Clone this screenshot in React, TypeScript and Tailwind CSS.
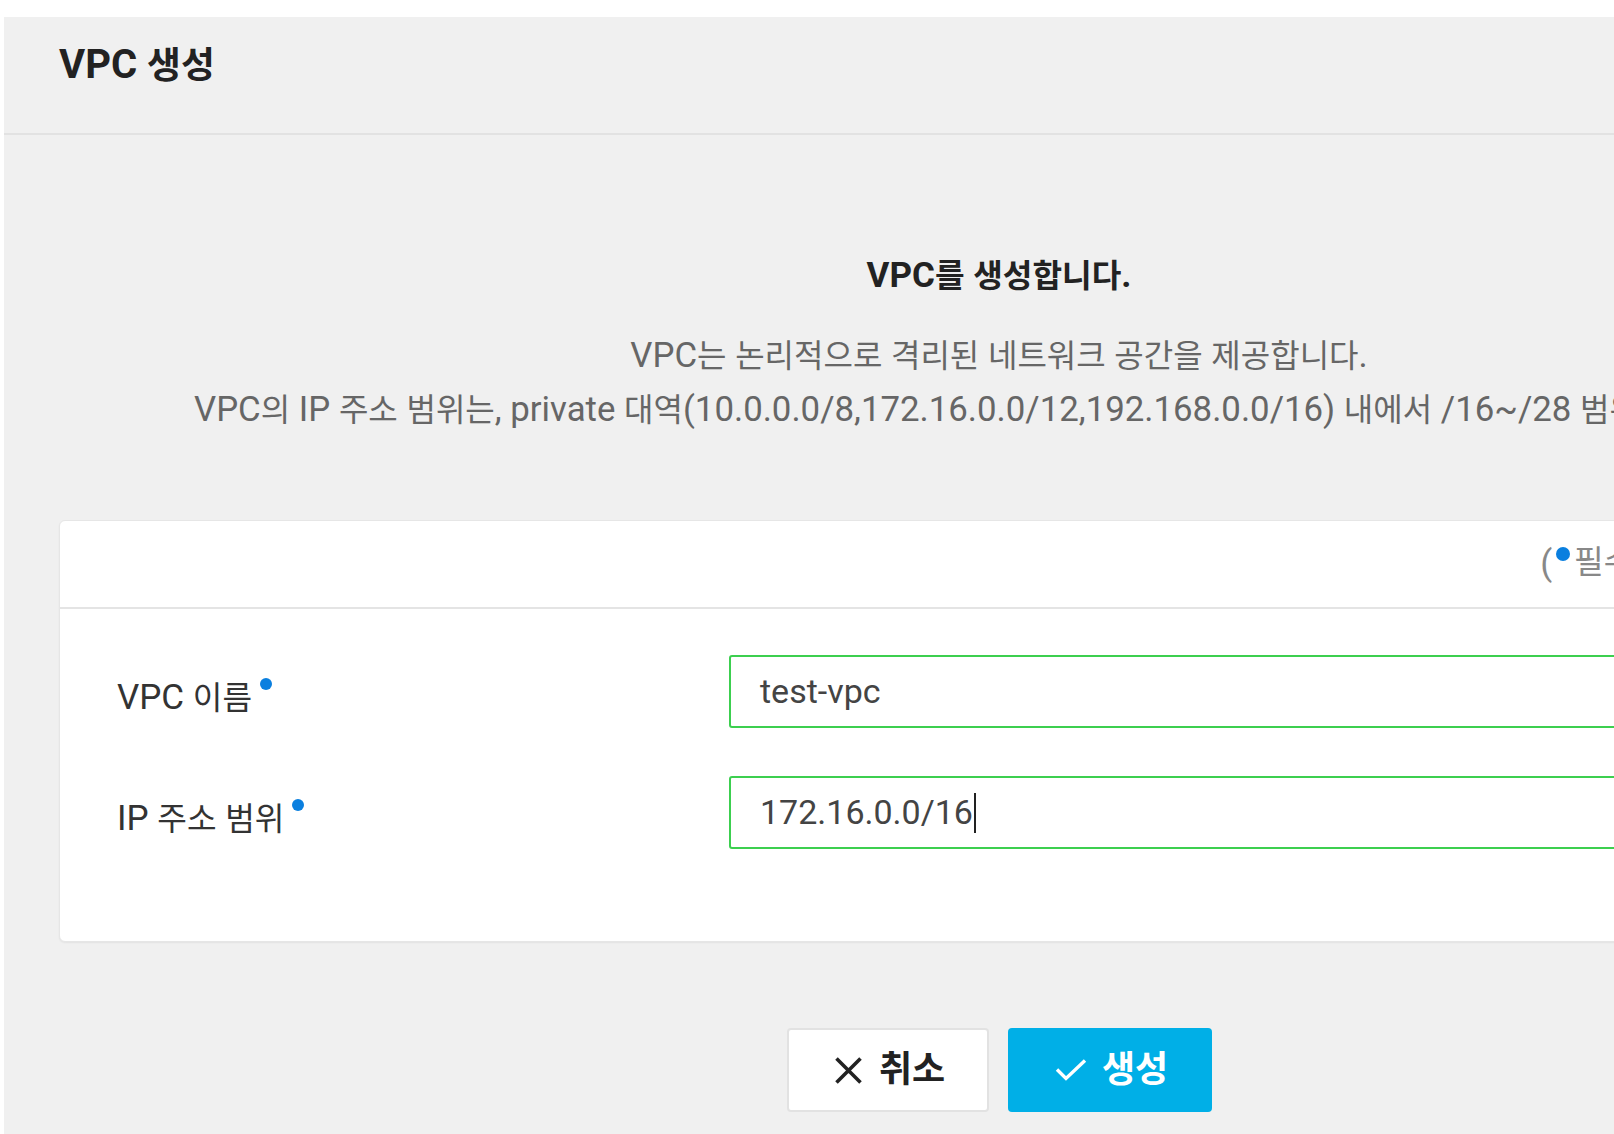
const fontStack = "font-['Roboto','Noto_Sans_CJK_KR',sans-serif]";

const fields = [
  { label: "VPC 이름", value: "test-vpc", caret: false },
  { label: "IP 주소 범위", value: "172.16.0.0/16", caret: true },
];

// hangul runs are set a bit smaller than the latin text around them
function Ko({ text }: { text: string }) {
  return (
    <>
      {text.split(/([가-힣]+)/).map((part, i) =>
        /[가-힣]/.test(part) ? (
          <span key={i} className="text-[0.92em]">
            {part}
          </span>
        ) : (
          part
        ),
      )}
    </>
  );
}

function RequiredDot() {
  return <span className="ml-[8px] inline-block h-[12px] w-[12px] shrink-0 rounded-full bg-[#0a7fdf]" />;
}

function CloseIcon() {
  return (
    <svg width="29" height="29" viewBox="0 0 29 29" fill="none" aria-hidden>
      <path d="M2.5 2.5L26.5 26.5M26.5 2.5L2.5 26.5" stroke="currentColor" strokeWidth="3.6" />
    </svg>
  );
}

function CheckIcon() {
  return (
    <svg width="32" height="22" viewBox="0 0 32 22" fill="none" aria-hidden>
      <path d="M2 10.5L11 19.5L30 1.5" stroke="currentColor" strokeWidth="3.4" />
    </svg>
  );
}

export default function App() {
  return (
    <div className={`h-[1134px] w-[1614px] overflow-hidden bg-white pl-[4px] pt-[17px] ${fontStack}`}>
      <div className="min-h-[1117px] w-[1990px] bg-[#f0f0f0]">
        <header className="box-border h-[118px] border-b-2 border-[#e2e2e2] px-[55px] pt-[26px]">
          <h1 className="text-[40px] font-bold leading-[44px] text-[#222]">
            <Ko text="VPC 생성" />
          </h1>
        </header>

        <main className="px-[55px]">
          <div className="pt-[119px] text-center">
            <h2 className="text-[35px] font-bold leading-[44px] text-[#222]">
              <Ko text="VPC를 생성합니다." />
            </h2>
            <p className="mt-[31px] text-[34.8px] leading-[53px] text-[#666]">
              <Ko text="VPC는 논리적으로 격리된 네트워크 공간을 제공합니다." />
              <br />
              <Ko text="VPC의 IP 주소 범위는, private 대역(10.0.0.0/8,172.16.0.0/12,192.168.0.0/16) 내에서 /16~/28 범위여야 합니다." />
            </p>
          </div>

          <section className="mt-[83px] rounded-[6px] border border-[#e6e6e6] bg-white shadow-[0_1px_2px_rgba(0,0,0,0.06)]">
            <div className="box-border flex h-[88px] items-center justify-end border-b-2 border-[#e4e4e4] pr-[174px]">
              <span className="flex items-start text-[35px] text-[#888]">
                (
                <span className="mt-[9px] mr-[4px] ml-[4px] inline-block h-[14px] w-[14px] rounded-full bg-[#0a7fdf]" />
                <Ko text="필수 입력 사항)" />
              </span>
            </div>

            <div className="flex flex-col gap-[48px] pb-[92px] pl-[57px] pt-[46px]">
              {fields.map((field) => (
                <div key={field.label} className="flex items-center">
                  <div className="flex w-[612px] items-start pt-[13px]">
                    <span className="text-[35px] leading-[40px] text-[#333]">
                      <Ko text={field.label} />
                    </span>
                    <RequiredDot />
                  </div>
                  <div className="box-border flex h-[73px] w-[1166px] items-center rounded-[3px] border-2 border-[#3ccf4f] bg-white pl-[29px]">
                    <span className="text-[34px] text-[#444]">{field.value}</span>
                    {field.caret && <span className="ml-[1px] inline-block h-[40px] w-[2px] bg-[#222]" />}
                  </div>
                </div>
              ))}
            </div>
          </section>

          <div className="mt-[86px] flex justify-center gap-[19px]">
            <button
              type="button"
              className="box-border flex h-[84px] w-[202px] items-center justify-center gap-[16px] rounded-[4px] border-2 border-[#e2e2e2] bg-white pl-[4px] text-[36px] font-bold text-[#222]"
            >
              <CloseIcon />
              취소
            </button>
            <button
              type="button"
              className="box-border flex h-[84px] w-[204px] items-center justify-center gap-[15px] rounded-[4px] bg-[#00afe7] pl-[4px] text-[36px] font-bold text-white"
            >
              <CheckIcon />
              생성
            </button>
          </div>
        </main>
      </div>
    </div>
  );
}
